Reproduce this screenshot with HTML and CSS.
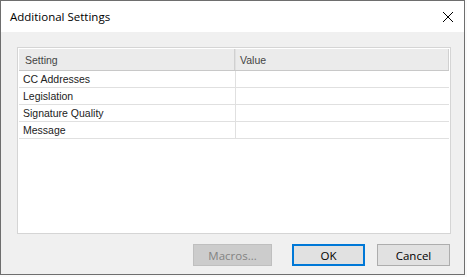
FILE: index.html
```html
<!DOCTYPE html>
<html lang="en">
<head>
  <meta charset="UTF-8" />
  <title>Additional Settings</title>
  <link rel="stylesheet" href="styles.css">
</head>
<body>
  <div class="window">
    <div class="titlebar">
      <span class="title">Additional Settings</span>
      <svg class="close" width="12" height="12" viewBox="0 0 12 12">
        <path d="M1 1 L11 11 M11 1 L1 11" stroke="#000" stroke-width="1" fill="none" />
      </svg>
    </div>
    <div class="content">
      <div class="listview">
        <div class="row head">
          <div class="cell first">Setting</div>
          <div class="cell">Value</div>
        </div>
        <div class="row"><div class="cell first">CC Addresses</div><div class="cell"></div></div>
        <div class="row"><div class="cell first">Legislation</div><div class="cell"></div></div>
        <div class="row"><div class="cell first">Signature Quality</div><div class="cell"></div></div>
        <div class="row"><div class="cell first">Message</div><div class="cell"></div></div>
      </div>
      <div class="buttons">
        <button class="btn disabled">Macros...</button>
        <button class="btn default">OK</button>
        <button class="btn">Cancel</button>
      </div>
    </div>
  </div>
</body>
</html>
```

FILE: styles.css
```css
body { margin: 0; background: #fafafa; font-family: "Open Sans", "Liberation Sans", sans-serif; }
.window { width: 465px; height: 275px; box-sizing: border-box; border: 1px solid #6e6e6e; display: flex; flex-direction: column; background: #f0f0f0; }
.titlebar { height: 31px; background: #fff; display: flex; align-items: center; justify-content: space-between; padding: 0 10px 0 9px; flex-shrink: 0; }
.title { font-size: 11.5px; color: #000; }
.close { margin-top: 1px; }
.content { flex: 1; padding: 15px 13px 0 16px; display: flex; flex-direction: column; }
.listview { height: 187px; box-sizing: border-box; border: 1px solid #d5d5d5; background: #fff; padding: 1px 1px 0 1px; font-family: "Liberation Sans", Arial, sans-serif; font-size: 10.5px; color: #222; }
.row { display: flex; height: 17px; border-bottom: 1px solid #e0e0e0; box-sizing: border-box; }
.row.head { height: 22px; background: #ebebeb; border-bottom: 1px solid #c8c8c8; color: #444; }
.row.head .cell { border-right: 1px solid #d0d0d0; }
.cell { display: flex; align-items: center; padding-left: 4px; box-sizing: border-box; flex: 1; border-left: 1px solid #e0e0e0; }
.cell.first { flex: 0 0 216px; border-left: none; }
.head .cell.first { padding-left: 6px; }
.buttons { display: flex; justify-content: flex-end; gap: 12px; margin-top: 10px; margin-right: 1px; }
.btn { width: 73px; height: 22px; box-sizing: border-box; border: 1px solid #adadad; background: #e1e1e1; font-family: "Open Sans", "Liberation Sans", sans-serif; font-size: 11.5px; color: #000; padding: 0; }
.btn.disabled { width: 79px; color: #838383; background: #cccccc; border-color: #bfbfbf; margin-right: 8px; }
.btn.default { border: 2px solid #0078d7; }
```
